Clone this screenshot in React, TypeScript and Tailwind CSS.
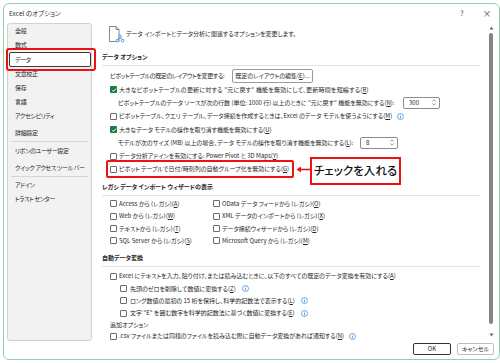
import React from "react";

const Check = ({ checked }: { checked?: boolean }) =>
  checked ? (
    <span className="w-[7px] h-[7px] rounded-[1px] bg-[#1a7f44] flex items-center justify-center shrink-0">
      <svg width="6" height="6" viewBox="0 0 6 6">
        <path d="M1 3.1 L2.4 4.5 L5 1.5" stroke="white" strokeWidth="1" fill="none" />
      </svg>
    </span>
  ) : (
    <span className="w-[7px] h-[7px] rounded-[1px] border border-[#6b6b6b] bg-white shrink-0" />
  );

const Info = () => (
  <svg width="7" height="7" viewBox="0 0 8 8" className="shrink-0 ml-[3px]">
    <circle cx="4" cy="4" r="3.4" fill="none" stroke="#2f7fd8" strokeWidth="0.8" />
    <path d="M4 3.5V6" stroke="#2f7fd8" strokeWidth="0.9" />
    <circle cx="4" cy="2.3" r="0.55" fill="#2f7fd8" />
  </svg>
);

const U = ({ c }: { c: string }) => (
  <>
    (<span className="underline">{c}</span>)
  </>
);

const Spin = ({ v, w }: { v: string; w: string }) => (
  <div className={`${w} h-[12px] border border-[#8c8c8c] rounded-[2px] bg-white flex items-center pl-[5px] pr-[3px] shrink-0`}>
    <span>{v}</span>
    <div className="ml-auto flex flex-col items-center gap-[1px]">
      <svg width="4" height="3" viewBox="0 0 4 3"><path d="M0.5 2.5 L2 0.8 L3.5 2.5" stroke="#555" strokeWidth="0.6" fill="none" /></svg>
      <svg width="4" height="3" viewBox="0 0 4 3"><path d="M0.5 0.5 L2 2.2 L3.5 0.5" stroke="#555" strokeWidth="0.6" fill="none" /></svg>
    </div>
  </div>
);

const SideItem = ({ label, selected, cls = "" }: { label: string; selected?: boolean; cls?: string }) => (
  <div
    className={`ml-[1px] h-[14px] flex items-center pl-[5px] border rounded-[2px] ${
      selected ? "border-[#3a3a3a] bg-white h-[15px]" : "border-transparent"
    } ${cls}`}
  >
    {label}
  </div>
);

const SectionHeader = ({ title, cls = "" }: { title: string; cls?: string }) => (
  <div className={`h-[16px] pt-[1px] border-b border-[#e3e3e3] font-bold text-[6px] shrink-0 ${cls}`}>
    <div className="h-[12px] flex items-center">{title}</div>
  </div>
);

export default function App() {
  return (
    <div className="w-[500px] h-[363px] bg-white overflow-hidden relative whitespace-nowrap text-[#262626] text-[6px] leading-none [font-family:'Noto_Sans_CJK_JP','Noto_Sans',sans-serif] [font-feature-settings:'palt']">
      <div className="ml-[3px] mt-[3px] w-[497px] h-[357px] border border-[#90d0ad] rounded-[6px] flex flex-col bg-white">
        {/* title bar */}
        <div className="h-[19px] flex items-center pl-[5px] shrink-0">
          <span className="text-[6.5px] text-[#333]">Excel のオプション</span>
          <span className="ml-auto w-[10px] text-center text-[7px] text-[#444]">?</span>
          <span className="ml-[15px] mr-[7px] w-[10px] text-center text-[9px] text-[#444]">×</span>
        </div>

        {/* body */}
        <div className="h-[318px] flex shrink-0">
          {/* sidebar */}
          <div className="ml-[3px] w-[85px] h-full bg-[#f2f2f2] border border-[#d2d2d2] rounded-[3px] flex flex-col shrink-0 text-[6px] tracking-[-0.35px] overflow-hidden">
            <SideItem label="全般" cls="h-[13px]" />
            <SideItem label="数式" />
            <SideItem label="データ" selected />
            <SideItem label="文章校正" />
            <SideItem label="保存" />
            <SideItem label="言語" />
            <SideItem label="アクセシビリティ" />
            <SideItem label="詳細設定" cls="mt-[3px]" />
            <div className="mx-[3px] mt-[1px] border-t border-[#d6d6d6]" />
            <SideItem label="リボンのユーザー設定" cls="mt-[2px]" />
            <SideItem label="クイック アクセス ツール バー" cls="mt-[3px]" />
            <div className="mx-[3px] mt-[1px] border-t border-[#d6d6d6]" />
            <SideItem label="アドイン" cls="mt-[1px]" />
            <SideItem label="トラスト センター" />
          </div>

          {/* content */}
          <div className="w-[394px] h-full overflow-hidden pl-[10px] pr-[6px] flex flex-col shrink-0">
            <div className="h-[22px] flex items-center shrink-0">
              <svg width="17" height="18" viewBox="0 0 17 18" className="ml-[6px] shrink-0">
                <path d="M1.5 1.5 H8 L11 4.5 V16.5 H1.5 Z" fill="white" stroke="#6a6a6a" strokeWidth="0.8" />
                <path d="M8 1.5 V4.5 H11" fill="none" stroke="#6a6a6a" strokeWidth="0.8" />
                <path d="M12 11.5 L9.5 15.5 M12 11.5 L14.5 15.5" stroke="#2f7fd8" strokeWidth="0.8" />
                <circle cx="12" cy="11.3" r="1.3" fill="white" stroke="#2f7fd8" strokeWidth="0.8" />
                <circle cx="9.5" cy="15.6" r="1.3" fill="white" stroke="#2f7fd8" strokeWidth="0.8" />
                <circle cx="14.6" cy="15.6" r="1.3" fill="white" stroke="#2f7fd8" strokeWidth="0.8" />
              </svg>
              <span className="ml-[1px]">データ インポートとデータ分析に関連するオプションを変更します。</span>
            </div>

            <SectionHeader title="データ オプション" cls="mt-[5px]" />

            <div className="mt-[2px] h-[15px] flex items-center pl-[8px] shrink-0">
              <span className="w-[122px] shrink-0 tracking-[-0.35px]">ピボットテーブルの既定のレイアウトを変更する:</span>
              <div className="w-[81px] h-[14px] border border-[#9a9a9a] rounded-[2px] flex items-center justify-center shrink-0 bg-white">
                既定のレイアウトの編集<U c="E" />...
              </div>
            </div>
            <div className="h-[13.3px] flex items-center gap-[2px] pl-[8px] shrink-0">
              <Check checked />
              <span className="tracking-[0.2px]">大きなピボットテーブルの更新に対する "元に戻す" 機能を無効にして、更新時間を短縮する<U c="R" /></span>
            </div>
            <div className="h-[13.3px] flex items-center pl-[16px] shrink-0">
              <span className="w-[285px] shrink-0">
                ピボットテーブルのデータ ソースが次の行数 (単位: 1000 行) 以上のときに "元に戻す" 機能を無効にする<U c="N" />:
              </span>
              <Spin v="300" w="w-[37px]" />
            </div>
            <div className="h-[13.3px] flex items-center gap-[2px] pl-[8px] shrink-0">
              <Check />
              <span>ピボットテーブル、クエリ テーブル、データ接続を作成するときは、Excel のデータ モデルを使うようにする<U c="M" /></span>
              <Info />
            </div>
            <div className="h-[13.3px] flex items-center gap-[2px] pl-[8px] shrink-0">
              <Check checked />
              <span>大きなデータ モデルの操作を取り消す機能を無効にする<U c="U" /></span>
            </div>
            <div className="h-[13.3px] flex items-center pl-[16px] shrink-0">
              <span className="w-[242px] shrink-0">
                モデルが次のサイズ (MB) 以上の場合、データ モデルの操作を取り消す機能を無効にする<U c="L" />:
              </span>
              <Spin v="8" w="w-[38px]" />
            </div>
            <div className="h-[13.3px] flex items-center gap-[2px] pl-[8px] shrink-0">
              <Check />
              <span>データ分析アドインを有効にする: Power Pivot と 3D Maps<U c="Y" /></span>
            </div>
            <div className="h-[13.3px] flex items-center gap-[2px] pl-[8px] shrink-0">
              <Check />
              <span>ピボット テーブルで日付/時刻列の自動グループ化を無効にする<U c="G" /></span>
            </div>

            <SectionHeader title="レガシ データ インポート ウィザードの表示" cls="mt-[4px]" />

            <div className="mt-[1.5px] grid grid-cols-[103px_1fr] pl-[8px] shrink-0">
              {[
                [<>Access から (レガシ)<U c="A" /></>, <>OData データ フィードから (レガシ)<U c="O" /></>],
                [<>Web から (レガシ)<U c="W" /></>, <>XML データのインポートから (レガシ)<U c="X" /></>],
                [<>テキストから (レガシ)<U c="T" /></>, <>データ接続ウィザードから (レガシ)<U c="D" /></>],
                [<>SQL Server から (レガシ)<U c="S" /></>, <>Microsoft Query から (レガシ)<U c="M" /></>],
              ].map((pair, i) => (
                <React.Fragment key={i}>
                  <div className="h-[12.4px] flex items-center gap-[2px]">
                    <Check />
                    <span>{pair[0]}</span>
                  </div>
                  <div className="h-[12.4px] flex items-center gap-[2px]">
                    <Check />
                    <span>{pair[1]}</span>
                  </div>
                </React.Fragment>
              ))}
            </div>

            <SectionHeader title="自動データ変換" cls="mt-[4px]" />

            <div className="mt-[3px] h-[12.3px] flex items-center gap-[2px] pl-[8px] shrink-0">
              <Check />
              <span>Excel にテキストを入力、貼り付け、または読み込むときに、以下のすべての既定のデータ変換を有効にする<U c="A" /></span>
            </div>
            <div className="h-[12.3px] flex items-center gap-[3px] pl-[18px] shrink-0">
              <Check />
              <span>先頭のゼロを削除して数値に変換する<U c="Z" /></span>
              <Info />
            </div>
            <div className="h-[12.3px] flex items-center gap-[3px] pl-[18px] shrink-0">
              <Check />
              <span>ロング数値の最初の 15 桁を保持し、科学的記数法で表示する<U c="L" /></span>
              <Info />
            </div>
            <div className="h-[12.3px] flex items-center gap-[3px] pl-[18px] shrink-0">
              <Check />
              <span>文字 "E" を囲む数字を科学的記数法に基づく数値に変換する<U c="E" /></span>
              <Info />
            </div>
            <div className="h-[11px] flex items-center pl-[8px] shrink-0">追加オプション</div>
            <div className="h-[12px] flex items-center gap-[2px] pl-[8px] shrink-0">
              <Check />
              <span>.csv ファイルまたは同様のファイルを読み込む際に自動データ変換があれば通知する<U c="N" /></span>
              <Info />
            </div>
          </div>

          {/* scrollbar */}
          <div className="w-[10px] h-full flex flex-col items-center pt-[3px] shrink-0">
            <svg width="5" height="4" viewBox="0 0 5 4"><path d="M0.5 3.5 L2.5 0.5 L4.5 3.5 Z" fill="#6a6a6a" /></svg>
            <div className="mt-[3px] w-[4px] h-[291px] rounded-[2px] bg-[#858585]" />
            <svg width="5" height="4" viewBox="0 0 5 4" className="mt-[9px]"><path d="M0.5 0.5 L2.5 3.5 L4.5 0.5 Z" fill="#6a6a6a" /></svg>
          </div>
        </div>

        {/* footer */}
        <div className="h-[18px] flex items-start justify-end pt-[2px] pr-[5px] gap-[6px] shrink-0">
          <div className="w-[38px] h-[12px] border border-[#333] rounded-[2px] flex items-center justify-center">OK</div>
          <div className="w-[37px] h-[12px] border border-[#bdbdbd] rounded-[2px] flex items-center justify-center">キャンセル</div>
        </div>
      </div>

      {/* annotations */}
      <div className="absolute left-[6px] top-[48px] w-[90px] h-[23px] border-2 border-[#ee1111] rounded-[3px]" />
      <div className="absolute left-[106px] top-[160px] w-[188px] h-[18px] border-2 border-[#ee1111] rounded-[2px]" />
      <svg className="absolute left-[296px] top-[165px]" width="15" height="9" viewBox="0 0 15 9">
        <path d="M4 4.5 H15" stroke="#ee1111" strokeWidth="1.6" />
        <path d="M0.5 4.5 L5 1.5 L5 7.5 Z" fill="#ee1111" />
      </svg>
      <div className="absolute left-[310px] top-[157px] w-[91px] h-[28px] border-2 border-[#ee1111] bg-white flex items-center justify-center text-[11.5px] font-medium text-[#111]">
        チェックを入れる
      </div>
    </div>
  );
}
